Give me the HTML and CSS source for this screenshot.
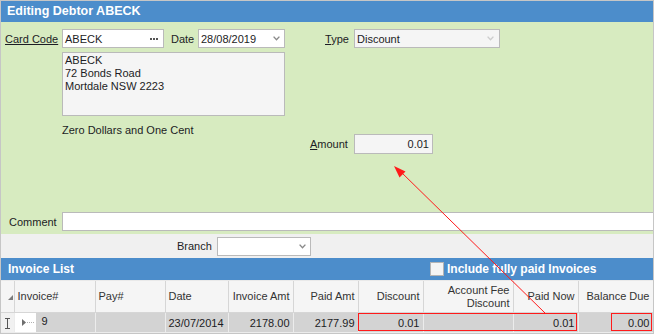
FILE: index.html
```html
<!DOCTYPE html>
<html lang="en">
<head>
    <meta charset="UTF-8">
    <title>Editing Debtor ABECK</title>
    <link rel="stylesheet" href="styles.css">
</head>
<body>

<div class="window">
    <div class="titlebar">Editing Debtor ABECK</div>

    <div class="form">
        <div class="row-top">
            <span class="lbl lbl-card">Card Code</span>
            <div class="field field-card">
                <span>ABECK</span>
                <svg class="dots" width="8" height="2" viewBox="0 0 8 2"><rect x="0" y="0" width="2" height="2"/><rect x="3" y="0" width="2" height="2"/><rect x="6" y="0" width="2" height="2"/></svg>
            </div>
            <span class="lbl lbl-date">Date</span>
            <div class="field field-date">
                <span>28/08/2019</span>
                <svg class="chev" width="7" height="5" viewBox="0 0 7 5"><path d="M0.6 0.6 L3.5 3.8 L6.4 0.6"/></svg>
            </div>
            <span class="lbl lbl-type"><u>T</u>ype</span>
            <div class="field field-type readonly">
                <span>Discount</span>
                <svg class="chev chev-off" width="7" height="5" viewBox="0 0 7 5"><path d="M0.6 0.6 L3.5 3.8 L6.4 0.6"/></svg>
            </div>
        </div>

        <div class="row-mid">
            <div class="col-left">
                <div class="address">ABECK<br>72 Bonds Road<br>Mortdale NSW 2223</div>
                <div class="words">Zero Dollars and One Cent</div>
            </div>
            <div class="amount">
                <span class="lbl lbl-amount"><u>A</u>mount</span>
                <div class="field field-amount readonly">0.01</div>
            </div>
        </div>

        <div class="row-comment">
            <span class="lbl lbl-comment">Comment</span>
            <div class="field field-comment"></div>
        </div>
    </div>

    <div class="branch-bar">
        <span class="lbl lbl-branch">Branch</span>
        <div class="field field-branch">
            <span></span>
            <svg class="chev" width="7" height="5" viewBox="0 0 7 5"><path d="M0.6 0.6 L3.5 3.8 L6.4 0.6"/></svg>
        </div>
    </div>

    <div class="list-bar">
        <span class="list-title">Invoice List</span>
        <span class="checkbox"></span>
        <span>Include fully paid Invoices</span>
    </div>

    <table class="grid">
        <colgroup>
            <col style="width:13px">
            <col style="width:81px">
            <col style="width:70px">
            <col style="width:63px">
            <col style="width:65px">
            <col style="width:65px">
            <col style="width:65px">
            <col style="width:90px">
            <col style="width:65px">
            <col style="width:75px">
        </colgroup>
        <thead>
            <tr>
                <th class="ind"><svg width="5" height="5" viewBox="0 0 5 5"><path d="M5 0 L5 5 L0 5 Z" fill="#7c7c7c"/></svg></th>
                <th class="left">Invoice#</th>
                <th class="left">Pay#</th>
                <th class="left">Date</th>
                <th>Invoice Amt</th>
                <th>Paid Amt</th>
                <th>Discount</th>
                <th>Account Fee<br>Discount</th>
                <th>Paid Now</th>
                <th>Balance Due</th>
            </tr>
        </thead>
        <tbody>
            <tr>
                <td class="ind"><svg width="7" height="11" viewBox="0 0 7 11"><path d="M1 0.5 H6 M3.5 0.5 V10.5 M1 10.5 H6" stroke="#555" fill="none"/></svg></td>
                <td class="left inv">
                    <span class="tree"><svg width="12" height="7" viewBox="0 0 12 7"><path d="M0 0 L4 3.5 L0 7 Z" fill="#6e6e6e"/><path d="M5 3.5 H12" stroke="#b0b0b0" stroke-dasharray="1 1"/></svg></span>
                    <span>9</span>
                </td>
                <td></td>
                <td class="left">23/07/2014</td>
                <td>2178.00</td>
                <td>2177.99</td>
                <td class="focus">0.01</td>
                <td></td>
                <td>0.01</td>
                <td>0.00</td>
            </tr>
        </tbody>
    </table>
</div>

<svg class="annot" width="654" height="334" viewBox="0 0 654 334">
    <rect x="358.5" y="313.5" width="218" height="17" fill="none" stroke="#ff1a1a"/>
    <rect x="611.5" y="313.5" width="40" height="17" fill="none" stroke="#ff1a1a"/>
    <line x1="545" y1="313" x2="400" y2="171" stroke="#ff1a1a" stroke-width="1"/>
    <path d="M394 166 L405.5 171.5 L399.5 177.5 Z" fill="#ff1a1a"/>
</svg>

</body>
</html>
```

FILE: styles.css
```css
/* Page */
body {
    margin: 0;
    font-family: "Liberation Sans", Arial, sans-serif;
    font-size: 11px;
    color: #1c1c24;
}

.window {
    width: 654px;
    height: 334px;
    box-sizing: border-box;
    border: 1px solid #c6c6c6;
    background: #f0f0f0;
    overflow: hidden;
}

/* Title */
.titlebar {
    height: 21px;
    line-height: 21px;
    padding-left: 6px;
    background: #4c8dcb;
    color: #fff;
    font-size: 12.5px;
    font-weight: bold;
}

/* Green form area */
.form {
    height: 212px;
    box-sizing: border-box;
    padding-top: 7px;
    background: #d7ebc0;
}

.lbl {
    white-space: nowrap;
}

.field {
    box-sizing: border-box;
    height: 19px;
    display: flex;
    align-items: center;
    justify-content: space-between;
    padding: 0 4px 0 2px;
    border: 1px solid #bababa;
    background: #fff;
}

.field.readonly {
    background: #f5f5f5;
}

.chev path {
    fill: none;
    stroke: #8a8a8a;
    stroke-width: 1.4;
}

.chev-off path {
    stroke: #cdcdcd;
}

.dots rect {
    fill: #555;
}

.row-top {
    display: flex;
    align-items: center;
    height: 19px;
}

.lbl-card {
    margin-left: 4px;
    width: 57px;
    text-decoration: underline;
}

.field-card {
    width: 102px;
    padding-right: 5px;
}

.lbl-date {
    margin-left: 7px;
    width: 27px;
}

.field-date {
    width: 87px;
}

.lbl-type {
    margin-left: 40px;
    width: 29px;
}

.field-type {
    width: 146px;
    padding-right: 5px;
}

.row-mid {
    display: flex;
    margin-top: 4px;
}

.col-left {
    margin-left: 61px;
    width: 223px;
}

.address {
    height: 64px;
    box-sizing: border-box;
    padding: 1px 2px;
    line-height: 13px;
    border: 1px solid #bababa;
    background: #f5f5f5;
}

.words {
    margin-top: 7px;
    line-height: 14px;
}

.amount {
    display: flex;
    align-items: center;
    margin-left: 25px;
    margin-top: 82px;
}

.lbl-amount {
    width: 44px;
}

.field-amount {
    width: 79px;
    height: 20px;
    justify-content: flex-end;
    padding-right: 3px;
}

.row-comment {
    display: flex;
    align-items: center;
    margin-top: 58px;
}

.lbl-comment {
    padding-left: 8px;
    width: 53px;
}

.field-comment {
    flex: 1;
    border-right: none;
}

/* Branch strip */
.branch-bar {
    height: 24px;
    display: flex;
    align-items: center;
}

.lbl-branch {
    margin-left: 176px;
    width: 40px;
}

.field-branch {
    width: 94px;
}

/* Invoice list header */
.list-bar {
    height: 22px;
    display: flex;
    align-items: center;
    padding-left: 7px;
    border-bottom: 1px solid #e9e9e9;
    background: #4c8dcb;
    color: #fff;
    font-size: 12px;
    font-weight: bold;
}

.list-title {
    width: 422px;
}

.checkbox {
    width: 14px;
    height: 14px;
    box-sizing: border-box;
    margin-right: 3px;
    border: 1px solid #b4b4b4;
    background: #f4f4f4;
}

/* Grid */
.grid {
    width: 652px;
    table-layout: fixed;
    border-collapse: collapse;
}

.grid th,
.grid td {
    padding: 0 3px;
    text-align: right;
    white-space: nowrap;
    overflow: hidden;
}

.grid th {
    height: 31px;
    line-height: 13px;
    font-weight: normal;
    color: #333;
    background: #f5f5f5;
    border: 1px solid #d6d6d6;
    border-top: none;
}

.grid td {
    height: 19px;
    background: #d3d3d3;
    border: 1px solid #ececec;
    border-top-color: #c6c6c6;
}

.grid .left {
    text-align: left;
}

.grid th.ind {
    padding: 0 1px 0 0;
    vertical-align: middle;
    border-left: none;
}

.grid td.ind {
    padding: 0;
    text-align: center;
    background: #f1f1f1;
    border-left: none;
}

.grid td.ind svg,
.grid th.ind svg {
    display: inline-block;
    vertical-align: middle;
}

.grid td.inv {
    padding: 0;
}

.inv {
    position: relative;
}

.tree {
    display: inline-flex;
    align-items: center;
    justify-content: flex-end;
    width: 21px;
    height: 19px;
    box-sizing: border-box;
    padding-right: 2px;
    background: #fff;
    vertical-align: middle;
    margin-right: 3px;
}

.grid td.focus {
    border-right: 1px dotted #444;
}

/* Annotation */
.annot {
    position: absolute;
    top: 0;
    left: 0;
    pointer-events: none;
}
```
